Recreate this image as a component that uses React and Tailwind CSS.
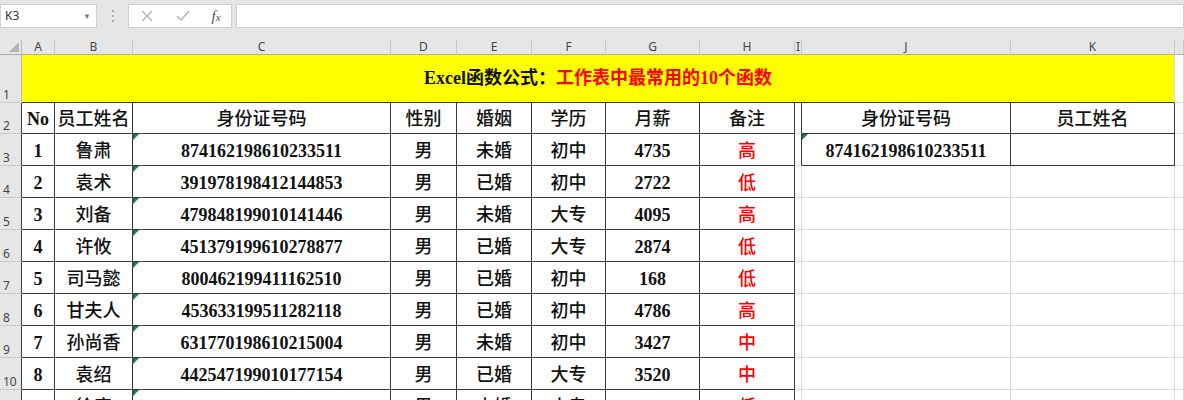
import React from "react";

const serif = "font-['Liberation_Serif','Noto_Sans_CJK_SC',serif]";
const ui = "font-['Noto_Sans','Liberation_Sans',sans-serif]";

const letters = ["A", "B", "C", "D", "E", "F", "G", "H", "I", "J", "K", ""];

const header = ["No", "员工姓名", "身份证号码", "性别", "婚姻", "学历", "月薪", "备注"];
const data = [
  ["1", "鲁肃", "874162198610233511", "男", "未婚", "初中", "4735", "高"],
  ["2", "袁术", "391978198412144853", "男", "已婚", "初中", "2722", "低"],
  ["3", "刘备", "479848199010141446", "男", "未婚", "大专", "4095", "高"],
  ["4", "许攸", "451379199610278877", "男", "已婚", "大专", "2874", "低"],
  ["5", "司马懿", "800462199411162510", "男", "已婚", "初中", "168", "低"],
  ["6", "甘夫人", "453633199511282118", "男", "已婚", "初中", "4786", "高"],
  ["7", "孙尚香", "631770198610215004", "男", "未婚", "初中", "3427", "中"],
  ["8", "袁绍", "442547199010177154", "男", "已婚", "大专", "3520", "中"],
  ["9", "徐庶", "873174198711264797", "男", "未婚", "大专", "3414", "低"],
];

// r = sheet row (2..11), c = column index (1 = A ... 12 = L)
const inMain = (r, c) => r >= 2 && r <= 11 && c >= 1 && c <= 8;
const inRight = (r, c) => r >= 2 && r <= 3 && c >= 10 && c <= 11;
const inTable = (r, c) => inMain(r, c) || inRight(r, c);

function cellText(r, c) {
  if (r === 2 && c <= 8) return header[c - 1];
  if (r >= 3 && c <= 8) return data[r - 3][c - 1];
  if (r === 2 && c === 10) return "身份证号码";
  if (r === 2 && c === 11) return "员工姓名";
  if (r === 3 && c === 10) return "874162198610233511";
  return "";
}

function Cell({ r, c }) {
  const text = cellText(r, c);
  const isNum = /^[0-9A-Za-z]+$/.test(text);
  const red = c === 8 && r >= 3;
  const flag = (c === 3 && r >= 3) || (c === 10 && r === 3);
  const right = inTable(r, c) || inTable(r, c + 1) ? "border-r-[#3a3a3a]" : "border-r-[#d9d9d9]";
  const bottom = inTable(r, c) || inTable(r + 1, c) ? "border-b-[#3a3a3a]" : "border-b-[#d9d9d9]";
  return (
    <div className={`relative flex items-center justify-center pt-[2px] border-r border-b bg-white ${right} ${bottom}`}>
      {flag && (
        <div className="absolute left-0 top-0 w-0 h-0 border-t-[6px] border-t-[#1f7a3a] border-r-[6px] border-r-transparent" />
      )}
      {text && (
        <span
          className={`${serif} text-[18px] leading-none whitespace-nowrap ${isNum ? "font-bold" : "font-medium"} ${red ? "text-[#ff0000]" : "text-[#111]"}`}
        >
          {text}
        </span>
      )}
    </div>
  );
}

function RowHead({ r }) {
  const right = inMain(r, 1) ? "border-r-[#3a3a3a]" : "border-r-[#bcbcbc]";
  return (
    <div className={`flex items-end pl-[3px] pb-[1px] bg-[#e6e6e6] border-r border-b border-b-[#c8c8c8] ${right}`}>
      <span className={`${ui} text-[12px] leading-none text-[#444]`}>{r}</span>
    </div>
  );
}

function FormulaBar() {
  return (
    <div className="h-[40px] bg-[#e6e6e6] pt-[4px]">
      <div className="flex h-[24px] items-stretch">
        <div className="w-[97px] bg-white border border-[#d2d2d2] flex items-center justify-between pl-[4px] pr-[5px]">
          <span className={`${ui} text-[12px] text-[#333]`}>K3</span>
          <span className="text-[8px] text-[#777]">▼</span>
        </div>
        <div className="w-[31px] flex items-center justify-center">
          <svg width="4" height="14" viewBox="0 0 4 14">
            <circle cx="2" cy="2" r="1" fill="#9a9a9a" />
            <circle cx="2" cy="7" r="1" fill="#9a9a9a" />
            <circle cx="2" cy="12" r="1" fill="#9a9a9a" />
          </svg>
        </div>
        <div className="w-[104px] bg-white border border-[#d2d2d2] flex items-center">
          <div className="w-[36px] flex justify-center">
            <svg width="12" height="12" viewBox="0 0 12 12">
              <path d="M1 1 L11 11 M11 1 L1 11" stroke="#b0b0b0" strokeWidth="1.3" fill="none" />
            </svg>
          </div>
          <div className="w-[36px] flex justify-center">
            <svg width="14" height="12" viewBox="0 0 14 12">
              <path d="M1 6 L5 10 L13 1" stroke="#b0b0b0" strokeWidth="1.3" fill="none" />
            </svg>
          </div>
          <div className="w-[30px] flex justify-center">
            <span className="font-['Liberation_Serif',serif] italic text-[15px] text-[#555] leading-none">
              f<span className="text-[11px]">x</span>
            </span>
          </div>
        </div>
        <div className="w-[4px]" />
        <div className="flex-1 bg-white border border-[#d2d2d2]" />
      </div>
    </div>
  );
}

export default function App() {
  const sheetRows = [2, 3, 4, 5, 6, 7, 8, 9, 10, 11];
  return (
    <div className="w-[1184px] h-[400px] overflow-hidden bg-white">
      <FormulaBar />
      <div className="grid grid-cols-[22px_33px_78px_258px_66px_75px_74px_94px_95px_7px_209px_164px_1fr] grid-rows-[15px_48px_31px_repeat(9,32px)]">
        <div className="relative bg-[#e6e6e6] border-r border-b border-r-[#bcbcbc] border-b-[#ababab]">
          <div className="absolute right-[2px] bottom-[2px] w-0 h-0 border-l-[10px] border-l-transparent border-b-[10px] border-b-[#b5b5b5]" />
        </div>
        {letters.map((l, i) => (
          <div
            key={"h" + i}
            className="flex items-center justify-center bg-[#e6e6e6] border-r border-b border-r-[#c8c8c8] border-b-[#ababab]"
          >
            <span className={`${ui} text-[12px] leading-none text-[#444]`}>{l}</span>
          </div>
        ))}

        <RowHead r={1} />
        <div className="col-span-11 flex items-center justify-center bg-[#ffff00] border-r border-b border-r-[#d9d9d9] border-b-[#3a3a3a]">
          <span className={`${serif} text-[18px] font-bold whitespace-nowrap`}>
            <span className="text-[#111]">Excel函数公式：</span>
            <span className="text-[#ff0000]">工作表中最常用的10个函数</span>
          </span>
        </div>
        <div className="bg-white border-r border-b border-r-[#d9d9d9] border-b-[#d9d9d9]" />

        {sheetRows.map((r) => (
          <React.Fragment key={r}>
            <RowHead r={r} />
            {letters.map((_, i) => (
              <Cell key={i} r={r} c={i + 1} />
            ))}
          </React.Fragment>
        ))}
      </div>
    </div>
  );
}
